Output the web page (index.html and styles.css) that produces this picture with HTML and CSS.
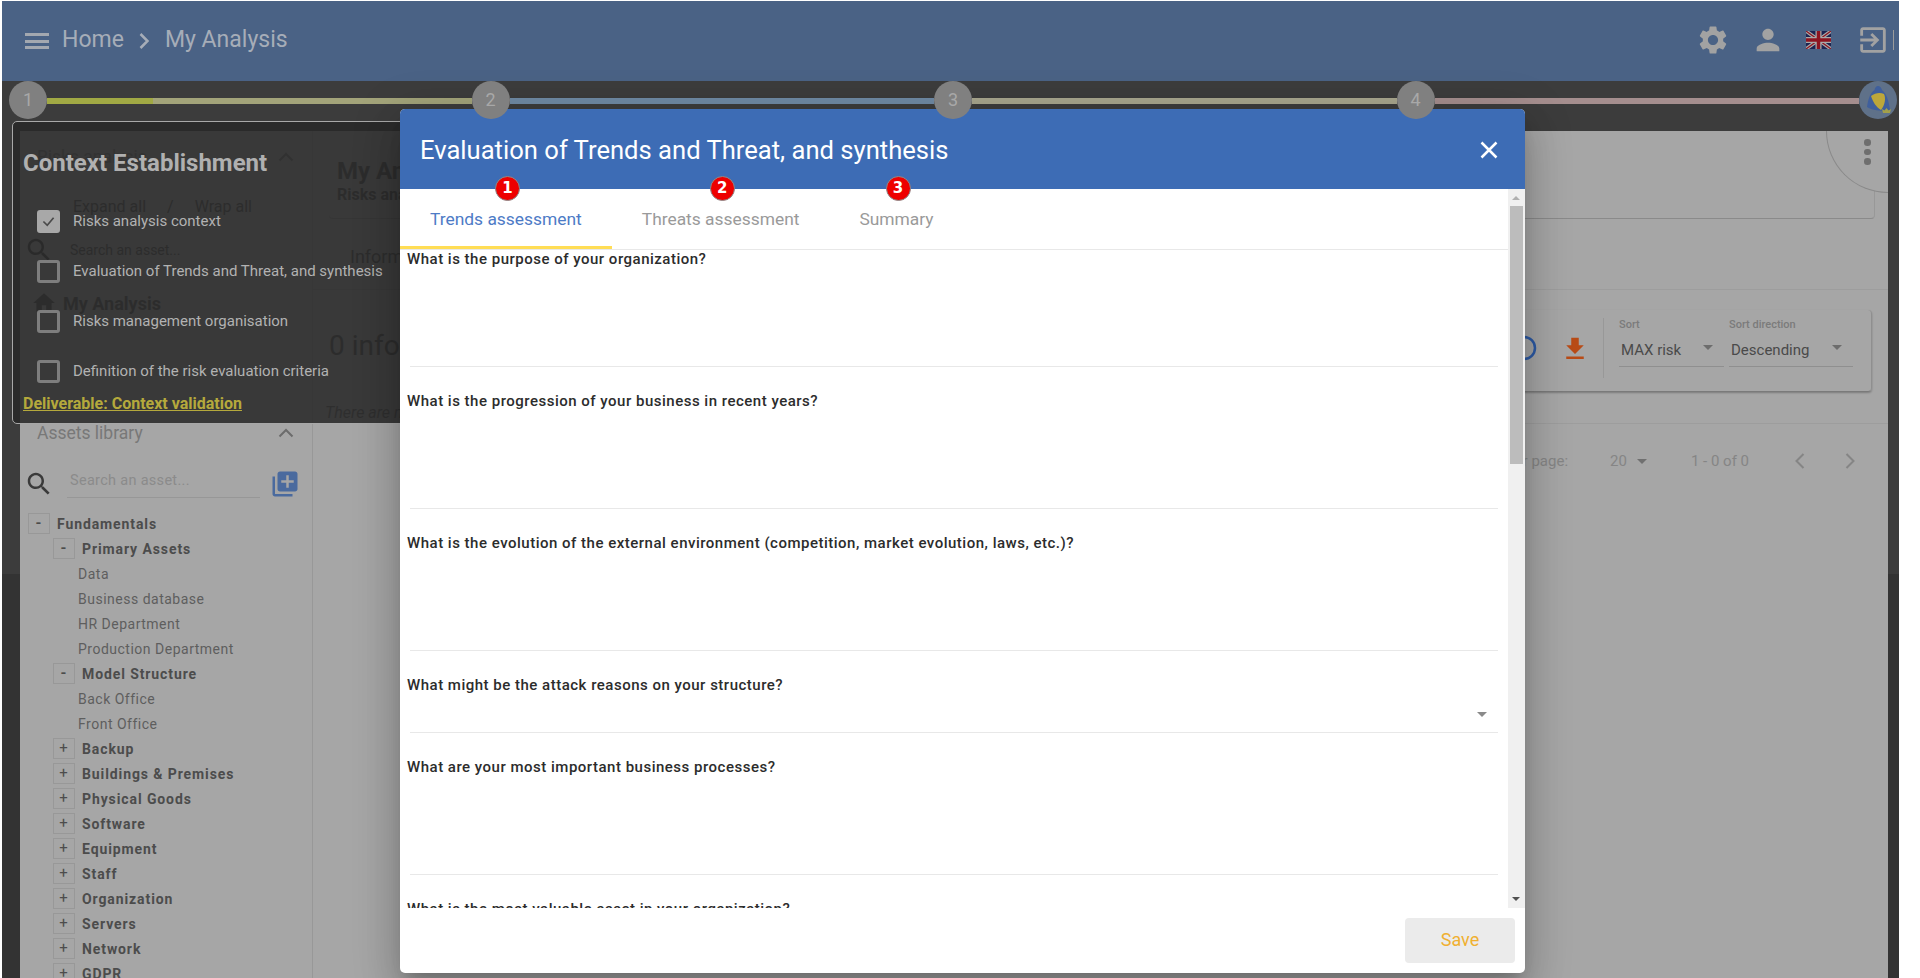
FILE: index.html
```html
<!DOCTYPE html>
<html lang="en">

<head>
  <meta charset="UTF-8" />
  <title>My Analysis</title>
  <link rel="stylesheet" href="styles.css">
</head>

<body>
  <div class="app">
    <header class="topbar">
      <div class="hamburger"><span></span><span></span><span></span></div>
      <span class="crumb">Home</span>
      <svg class="crumb-sep" viewBox="0 0 10 18"><polyline points="1.5,2 8.5,9 1.5,16" /></svg>
      <span class="crumb">My Analysis</span>
      <div class="topbar-icons">
        <svg class="top-icon" viewBox="0 0 24 24"><path d="M19.14 12.94c.04-.3.06-.61.06-.94 0-.32-.02-.64-.07-.94l2.03-1.58c.18-.14.23-.41.12-.61l-1.92-3.32c-.12-.22-.37-.29-.59-.22l-2.39.96c-.5-.38-1.03-.7-1.62-.94l-.36-2.54c-.04-.24-.24-.41-.48-.41h-3.84c-.24 0-.43.17-.47.41l-.36 2.54c-.59.24-1.13.57-1.62.94l-2.39-.96c-.22-.08-.47 0-.59.22L2.74 8.87c-.12.21-.08.47.12.61l2.03 1.58c-.05.3-.09.63-.09.94s.02.64.07.94l-2.03 1.58c-.18.14-.23.41-.12.61l1.92 3.32c.12.22.37.29.59.22l2.39-.96c.5.38 1.03.7 1.62.94l.36 2.54c.05.24.24.41.48.41h3.84c.24 0 .44-.17.47-.41l.36-2.54c.59-.24 1.13-.56 1.62-.94l2.39.96c.22.08.47 0 .59-.22l1.92-3.32c.12-.22.07-.47-.12-.61l-2.01-1.58zM12 15.6c-1.98 0-3.6-1.62-3.6-3.6s1.62-3.6 3.6-3.6 3.6 1.62 3.6 3.6-1.62 3.6-3.6 3.6z" /></svg>
        <svg class="top-icon" viewBox="0 0 24 24"><path d="M12 12c2.21 0 4-1.79 4-4s-1.79-4-4-4-4 1.79-4 4 1.79 4 4 4zm0 2c-2.67 0-8 1.34-8 4v2h16v-2c0-2.66-5.33-4-8-4z" /></svg>
        <svg class="flag" viewBox="0 0 50 36">
          <rect width="50" height="36" fill="#1c2452" />
          <path d="M0 0L50 36M50 0L0 36" stroke="#a9a9a9" stroke-width="7" />
          <path d="M0 0L50 36M50 0L0 36" stroke="#8e1420" stroke-width="2.5" />
          <path d="M25 0V36M0 18H50" stroke="#a9a9a9" stroke-width="12" />
          <path d="M25 0V36M0 18H50" stroke="#8e1420" stroke-width="7" />
        </svg>
        <svg class="top-icon exit" viewBox="0 0 24 24"><path d="M10.09 15.59L11.5 17l5-5-5-5-1.41 1.41L12.67 11H3v2h9.67l-2.58 2.59zM19 3H5c-1.11 0-2 .9-2 2v4h2V5h14v14H5v-4H3v4c0 1.1.89 2 2 2h14c1.1 0 2-.9 2-2V5c0-1.1-.9-2-2-2z" /></svg>
        <span class="top-bar-end"></span>
      </div>
    </header>

    <div class="stepper">
      <div class="step">1</div>
      <div class="step-line line-1"></div>
      <div class="step">2</div>
      <div class="step-line line-2"></div>
      <div class="step">3</div>
      <div class="step-line line-3"></div>
      <div class="step">4</div>
      <div class="step-line line-4"></div>
      <div class="step step-logo">
        <svg viewBox="0 0 38 38">
          <path d="M19 5c-2 0-3 2-3.500 4C11 12 9 19 8 26c4 3 17 5 23 3-1-8-3-16-8-20-.5-2-2-4-4-4z" fill="#3f5f9c" />
          <path d="M12 15c4-3 9-4 13-2 2 4 1 11-3 16-5-3-8-8-10-14z" fill="#bda73a" />
          <path d="M23 28l1 4h7l1-4-2.500 1.500L27.500 27l-2 2.500z" fill="#a3a04a" />
        </svg>
      </div>
    </div>

    <main class="panel">
      <aside class="sidebar">
        <div class="side-head">Risks analysis
          <svg class="side-chevron" viewBox="0 0 16 10"><polyline points="1.500,8.500 8,2 14.500,8.500" /></svg>
        </div>
        <div class="expand-row"><span>Expand all</span><span>/</span><span>Wrap all</span></div>
        <div class="ghost-search">
          <svg class="search-icon" viewBox="0 0 24 24"><path d="M15.500 14h-.79l-.28-.27C15.410 12.590 16 11.110 16 9.500 16 5.910 13.090 3 9.500 3S3 5.910 3 9.500 5.910 16 9.500 16c1.610 0 3.090-.59 4.230-1.570l.27.28v.79l5 4.990L20.490 19l-4.990-5zm-6 0C7.010 14 5 11.990 5 9.500S7.010 5 9.500 5 14 7.010 14 9.500 11.990 14 9.500 14z" /></svg>
          <span>Search an asset...</span>
        </div>
        <div class="home-row">
          <svg viewBox="0 0 24 24"><path d="M10 20v-6h4v6h5v-8h3L12 3 2 12h3v8z" /></svg>
          <span>My Analysis</span>
        </div>

        <div class="side-head assets-head">Assets library
          <svg class="side-chevron" viewBox="0 0 16 10"><polyline points="1.500,8.500 8,2 14.500,8.500" /></svg>
        </div>
        <div class="asset-search">
          <svg class="search-icon" viewBox="0 0 24 24"><path d="M15.500 14h-.79l-.28-.27C15.410 12.590 16 11.110 16 9.500 16 5.910 13.090 3 9.500 3S3 5.910 3 9.500 5.910 16 9.500 16c1.610 0 3.090-.59 4.230-1.570l.27.28v.79l5 4.990L20.490 19l-4.990-5zm-6 0C7.010 14 5 11.990 5 9.500S7.010 5 9.500 5 14 7.010 14 9.500 11.990 14 9.500 14z" /></svg>
          <div class="asset-input">Search an asset...</div>
          <svg class="add-icon" viewBox="0 0 24 24"><path d="M4 6H2v14c0 1.100.9 2 2 2h14v-2H4V6zm16-4H8c-1.100 0-2 .9-2 2v12c0 1.100.9 2 2 2h12c1.100 0 2-.9 2-2V4c0-1.100-.9-2-2-2zm-1 9h-4v4h-2v-4H9V9h4V5h2v4h4v2z" /></svg>
        </div>

        <ul class="tree">
          <li><div class="node"><span class="toggle open">-</span>Fundamentals</div>
            <ul>
              <li><div class="node"><span class="toggle open">-</span>Primary Assets</div>
                <ul>
                  <li class="leaf">Data</li>
                  <li class="leaf">Business database</li>
                  <li class="leaf">HR Department</li>
                  <li class="leaf">Production Department</li>
                </ul>
              </li>
              <li><div class="node"><span class="toggle open">-</span>Model Structure</div>
                <ul>
                  <li class="leaf">Back Office</li>
                  <li class="leaf">Front Office</li>
                </ul>
              </li>
            </ul>
          </li>
          <li><ul>
            <li><div class="node"><span class="toggle">+</span>Backup</div></li>
            <li><div class="node"><span class="toggle">+</span>Buildings &amp; Premises</div></li>
            <li><div class="node"><span class="toggle">+</span>Physical Goods</div></li>
            <li><div class="node"><span class="toggle">+</span>Software</div></li>
            <li><div class="node"><span class="toggle">+</span>Equipment</div></li>
            <li><div class="node"><span class="toggle">+</span>Staff</div></li>
            <li><div class="node"><span class="toggle">+</span>Organization</div></li>
            <li><div class="node"><span class="toggle">+</span>Servers</div></li>
            <li><div class="node"><span class="toggle">+</span>Network</div></li>
            <li><div class="node"><span class="toggle">+</span>GDPR</div></li>
          </ul></li>
        </ul>
      </aside>

      <section class="content">
        <div class="corner-menu"><span></span><span></span><span></span></div>
        <div class="summary-card">
          <h2>My Analysis</h2>
          <p>Risks analysis</p>
        </div>
        <div class="info-tabs"><span>Information risks</span></div>
        <div class="info-row">
          <div class="info-count">0 information risk</div>
          <div class="tool-card">
            <svg class="tool-ring" viewBox="0 0 26 26"><circle cx="13" cy="13" r="11" /></svg>
            <svg class="tool-download" viewBox="0 0 24 24"><path d="M19 9h-4V3H9v6H5l7 7 7-7zM5 18v2h14v-2H5z" /></svg>
            <span class="tool-sep"></span>
            <div class="sort sort-by">
              <label>Sort</label>
              <div class="sort-value">MAX risk<i class="caret"></i></div>
            </div>
            <div class="sort sort-dir">
              <label>Sort direction</label>
              <div class="sort-value">Descending<i class="caret"></i></div>
            </div>
          </div>
        </div>
        <div class="empty-row">There are no risks</div>
        <div class="pager">
          <span class="pager-label">Items per page:</span>
          <span class="pager-size">20<i class="caret"></i></span>
          <span class="pager-range">1 - 0 of 0</span>
          <svg class="pager-arrow" viewBox="0 0 12 18"><polyline points="9.500,2 2.500,9 9.500,16" /></svg>
          <svg class="pager-arrow" viewBox="0 0 12 18"><polyline points="2.500,2 9.500,9 2.500,16" /></svg>
        </div>
      </section>
    </main>
  </div>

  <div class="context-pop">
    <h3>Context Establishment</h3>
    <div class="check-row"><span class="check checked"><svg viewBox="0 0 20 20"><polyline points="4,10 8.500,14.500 16,5.500" /></svg></span>Risks analysis context</div>
    <div class="check-row"><span class="check"></span>Evaluation of Trends and Threat, and synthesis</div>
    <div class="check-row"><span class="check"></span>Risks management organisation</div>
    <div class="check-row"><span class="check"></span>Definition of the risk evaluation criteria</div>
    <a class="deliverable">Deliverable: Context validation</a>
  </div>

  <div class="modal">
    <div class="modal-head">
      <span class="modal-title">Evaluation of Trends and Threat, and synthesis</span>
      <svg class="modal-close" viewBox="0 0 18 18"><path d="M1.500 1.500L16.500 16.500M16.500 1.500L1.500 16.500" /></svg>
    </div>
    <div class="modal-body">
      <div class="modal-main">
        <div class="tabs">
          <div class="tab active">Trends assessment<span class="badge">1</span></div>
          <div class="tab">Threats assessment<span class="badge">2</span></div>
          <div class="tab">Summary<span class="badge">3</span></div>
        </div>
        <div class="questions">
          <div class="question"><label>What is the purpose of your organization?</label></div>
          <div class="question"><label>What is the progression of your business in recent years?</label></div>
          <div class="question"><label>What is the evolution of the external environment (competition, market evolution, laws, etc.)?</label></div>
          <div class="question short"><label>What might be the attack reasons on your structure?</label><i class="caret"></i></div>
          <div class="question"><label>What are your most important business processes?</label></div>
          <div class="question"><label>What is the most valuable asset in your organization?</label></div>
        </div>
      </div>
      <div class="scrollbar">
        <i class="scroll-up"></i>
        <div class="scroll-thumb"></div>
        <i class="scroll-down"></i>
      </div>
    </div>
    <div class="modal-foot">
      <button class="save-btn">Save</button>
    </div>
  </div>
</body>

</html>
```

FILE: styles.css
```css
* {
  margin: 0;
  padding: 0;
  box-sizing: border-box;
}

html,
body {
  height: 100%;
  overflow: hidden;
}

body {
  font-family: 'Roboto', 'Liberation Sans', sans-serif;
  background-color: #fff;
}

.app {
  margin: 1px 21px 0 2px;
  height: 977px;
  overflow: hidden;
  background: linear-gradient(#3c3c3c 573px, #333 573px);
}

/* top bar */
.topbar {
  height: 80px;
  background-color: #4a6285;
  display: flex;
  align-items: center;
  padding-left: 23px;
  color: #a6adb8;
}

.hamburger {
  width: 24px;
  height: 16px;
  display: flex;
  flex-direction: column;
  justify-content: space-between;
  margin-right: 13px;
}

.hamburger span {
  height: 3px;
  background-color: #a3a8b0;
}

.crumb {
  font-size: 23px;
  line-height: 30px;
  margin-top: -2px;
}

.crumb-sep {
  width: 10px;
  height: 18px;
  margin: 0 16px 0 15px;
  fill: none;
  stroke: #a6adb8;
  stroke-width: 2.5;
}

.topbar-icons {
  margin-left: auto;
  display: flex;
  align-items: center;
  padding-right: 5px;
  margin-top: -2px;
}

.top-icon {
  width: 34px;
  height: 34px;
  fill: #a2a2a2;
  margin-right: 21px;
}

.flag {
  width: 25px;
  height: 18px;
  margin-right: 25px;
}

.top-icon.exit {
  margin-right: 3px;
}

.top-bar-end {
  width: 1.500px;
  height: 20px;
  background-color: #9b9b9b;
}

/* steps */
.stepper {
  height: 50px;
  display: flex;
  align-items: flex-start;
  padding: 0 2px 0 7px;
}

.step {
  width: 38px;
  height: 38px;
  border-radius: 50%;
  background-color: #808080;
  color: #a8a8a8;
  font-size: 18px;
  line-height: 38px;
  text-align: center;
  flex: none;
  position: relative;
  z-index: 1;
}

.step-logo {
  background-color: #5f7189;
}

.step-logo svg {
  display: block;
  width: 38px;
  height: 38px;
}

.step-line {
  flex: 1;
  height: 6px;
  margin-top: 17px;
}

.line-1 {
  background: linear-gradient(90deg, #a1a944 25%, #a3a47a 25%);
}

.line-2 {
  background-color: #6f8aa5;
}

.line-3 {
  background-color: #a8a68e;
}

.line-4 {
  background-color: #a58e8e;
}

/* page behind the dialog */
.panel {
  margin: 0 11px 0 18px;
  height: 847px;
  background-color: #a6a6a6;
  display: flex;
  color: #4a4a4a;
}

.sidebar {
  width: 293px;
  flex: none;
  border-right: 1px solid #989898;
  padding: 16px 0 0 8px;
  height: 100%;
}

.side-head {
  position: relative;
  font-size: 17.500px;
  line-height: 20px;
  padding-left: 9px;
  color: #787878;
}

.side-chevron {
  position: absolute;
  left: 250px;
  top: 5px;
  width: 16px;
  height: 10px;
  fill: none;
  stroke: #6c6c6c;
  stroke-width: 2;
}

.expand-row {
  margin-top: 30px;
  padding-left: 45px;
  display: flex;
  gap: 21px;
  font-size: 16px;
  line-height: 20px;
}

.ghost-search {
  margin-top: 23px;
  display: flex;
  align-items: center;
  height: 20px;
  font-size: 14px;
}

.ghost-search span {
  margin-left: 16px;
}

.home-row {
  margin-top: 33px;
  padding-left: 3px;
  height: 20px;
  display: flex;
  align-items: center;
  font-size: 18px;
  font-weight: 700;
}

.home-row svg {
  width: 26px;
  height: 26px;
  fill: #4a4a4a;
  margin-right: 6px;
}

.assets-head {
  margin-top: 110px;
}

.asset-search {
  margin-top: 29px;
  height: 24px;
  display: flex;
  align-items: center;
}

.search-icon {
  width: 30px;
  height: 30px;
  fill: #3a3a3a;
  margin-left: -4px;
  flex: none;
}

.asset-input {
  width: 193px;
  margin: 2px 0 0 13px;
  font-size: 14.500px;
  line-height: 18px;
  letter-spacing: .3px;
  padding: 0 3px 7px;
  color: #8b8b8b;
  border-bottom: 1px solid #979797;
}

.add-icon {
  width: 30px;
  height: 30px;
  fill: #4a6a9e;
  margin-left: 10px;
  flex: none;
}

.tree {
  list-style: none;
  margin-top: 15px;
  font-size: 14px;
  letter-spacing: .5px;
}

.tree ul {
  list-style: none;
  padding-left: 25px;
}

.node {
  height: 25px;
  display: flex;
  align-items: center;
  font-weight: 700;
  letter-spacing: .9px;
  color: #4c4c4c;
}

.toggle {
  width: 22px;
  height: 21px;
  border: 1px solid #989898;
  margin-right: 7px;
  font-size: 15px;
  font-weight: 400;
  line-height: 18px;
  text-align: center;
  flex: none;
}

.toggle.open {
  font-weight: 700;
}

.leaf {
  height: 25px;
  line-height: 26px;
  color: #5e5e5e;
}

.content {
  flex: 1;
  min-width: 0;
  position: relative;
  padding-top: 12px;
}

.corner-menu {
  position: absolute;
  top: 0;
  right: 0;
  width: 62px;
  height: 62px;
  background-color: #a6a6a6;
  border-left: 1px solid #8a8a8a;
  border-bottom: 1px solid #8a8a8a;
  border-bottom-left-radius: 62px;
  display: flex;
  flex-direction: column;
  align-items: center;
  gap: 3px;
  padding: 8px 0 0 20px;
}

.corner-menu span {
  width: 6.500px;
  height: 6.500px;
  border-radius: 50%;
  background-color: #6e6e6e;
}

.summary-card {
  height: 76px;
  margin: 0 13px 0 16px;
  padding: 14px 0 0 8px;
  border-bottom: 1px solid #8a8a8a;
  border-right: 1px solid #989898;
  border-radius: 4px;
}

.summary-card h2 {
  font-size: 24px;
  line-height: 28px;
}

.summary-card p {
  font-size: 16px;
  font-weight: 700;
  line-height: 20px;
}

.info-tabs {
  height: 71px;
  padding: 28px 0 0 37px;
  font-size: 18px;
  line-height: 20px;
  border-bottom: 1px solid #9d9d9d;
}

.info-row {
  display: flex;
  justify-content: space-between;
  margin: 20px 16px 0 16px;
  height: 82px;
}

.info-count {
  font-size: 28px;
  line-height: 32px;
  margin-top: 20px;
}

.tool-card {
  width: 600px;
  display: flex;
  align-items: flex-start;
  justify-content: flex-end;
  padding-right: 18px;
  border-right: 1px solid #8f8f8f;
  border-bottom: 1px solid #7a7a7a;
  border-radius: 4px;
  box-shadow: 0 1px 2px rgba(0, 0, 0, .25);
}

.tool-ring {
  width: 26px;
  height: 26px;
  margin: 25px 23px 0 0;
  fill: none;
  stroke: #2d5aa5;
  stroke-width: 2.500;
}

.tool-download {
  width: 30px;
  height: 30px;
  margin: 24px 13px 0 0;
  fill: #b84b16;
}

.tool-sep {
  width: 1px;
  height: 60px;
  margin: 8px 15px 0 0;
  background-color: #989898;
}

.sort {
  padding-top: 9px;
}

.sort label {
  display: block;
  font-size: 11px;
  line-height: 12px;
  font-weight: 500;
  color: #7b7b7b;
}

.sort-value {
  position: relative;
  height: 27px;
  margin-top: 9px;
  padding-left: 2px;
  font-size: 15px;
  line-height: 20px;
  border-bottom: 1px solid #8f8f8f;
}

.sort-by {
  width: 105px;
  margin-right: 5px;
}

.sort-dir {
  width: 124px;
}

.sort-value .caret {
  position: absolute;
  top: 5px;
  right: 11px;
}

.caret {
  display: inline-block;
  width: 0;
  height: 0;
  border-left: 5px solid transparent;
  border-right: 5px solid transparent;
  border-top: 5px solid #6d6d6d;
}

.empty-row {
  height: 32px;
  padding: 12px 0 0 12px;
  font-size: 16px;
  font-style: italic;
  line-height: 18px;
  color: #5a5a5a;
  border-bottom: 1px solid #9d9d9d;
}

.pager {
  height: 74px;
  display: flex;
  align-items: center;
  justify-content: flex-end;
  padding-right: 32px;
  font-size: 15px;
  color: #858585;
}

.pager-size {
  margin-left: 42px;
  display: flex;
  align-items: center;
  gap: 10px;
}

.pager-size .caret {
  border-top-color: #707070;
}

.pager-range {
  margin: 0 7px 0 44px;
}

.pager-arrow {
  width: 12px;
  height: 18px;
  margin-left: 38px;
  fill: none;
  stroke: #858585;
  stroke-width: 2;
}

/* context popup */
.context-pop {
  position: absolute;
  left: 12px;
  top: 121px;
  width: 420px;
  height: 303px;
  padding: 27px 0 0 10px;
  background-color: rgba(40, 40, 40, .87);
  border: 1px solid #a8a8a8;
  border-radius: 5px;
  color: #b2b2b2;
}

.context-pop h3 {
  font-size: 24px;
  line-height: 28px;
  font-weight: 700;
  color: #b0b0b0;
}

.check-row {
  display: flex;
  align-items: center;
  height: 50px;
  font-size: 15px;
  padding-left: 14px;
}

.context-pop h3 + .check-row {
  margin-top: 19px;
}

.check {
  width: 23px;
  height: 23px;
  border: 3px solid #7e7e7e;
  border-radius: 3px;
  margin-right: 13px;
  flex: none;
}

.check.checked {
  background-color: #a8a8a8;
  border-color: #a8a8a8;
}

.check svg {
  display: block;
  width: 17px;
  height: 17px;
  fill: none;
  stroke: #4a4a4a;
  stroke-width: 2;
}

.deliverable {
  display: block;
  margin-top: -1px;
  font-size: 16px;
  font-weight: 700;
  line-height: 18px;
  color: #b5a93c;
  text-decoration: underline;
}

/* dialog */
.modal {
  position: absolute;
  left: 400px;
  top: 109px;
  width: 1125px;
  height: 864px;
  background-color: #fff;
  border-radius: 5px;
  display: flex;
  flex-direction: column;
  box-shadow: 0 11px 15px -7px rgba(0, 0, 0, .2), 0 24px 38px 3px rgba(0, 0, 0, .14), 0 9px 46px 8px rgba(0, 0, 0, .12);
}

.modal-head {
  height: 80px;
  flex: none;
  background-color: #3d6cb5;
  border-radius: 5px 5px 0 0;
  display: flex;
  align-items: center;
  justify-content: space-between;
  padding: 2px 27px 0 20px;
  color: #fff;
}

.modal-title {
  font-size: 25.600px;
  line-height: 30px;
}

.modal-close {
  width: 18px;
  height: 18px;
  fill: none;
  stroke: #fff;
  stroke-width: 2.500;
}

.modal-body {
  height: 719px;
  flex: none;
  display: flex;
}

.modal-main {
  flex: 1;
  min-width: 0;
  display: flex;
  flex-direction: column;
}

.tabs {
  height: 61px;
  flex: none;
  display: flex;
  border-bottom: 1px solid #e8e8e8;
}

.tab {
  position: relative;
  padding: 0 30px;
  height: 60px;
  line-height: 60px;
  font-size: 17.400px;
  color: #9a9a9a;
}

.tab.active {
  color: #4d7bc6;
  border-bottom: 3px solid #ffdd55;
}

.badge {
  position: absolute;
  left: 50%;
  top: -13px;
  width: 25px;
  height: 25px;
  margin-left: -11px;
  border-radius: 50%;
  background-color: #ee0000;
  border: 1px solid #8c8c8c;
  color: #fff;
  font-family: 'DejaVu Sans', sans-serif;
  font-size: 15px;
  font-weight: 700;
  line-height: 22px;
  text-align: center;
}

.questions {
  flex: 1;
  min-height: 0;
  overflow: hidden;
  padding-left: 7px;
}

.question {
  position: relative;
  height: 117px;
  margin-bottom: 25px;
}

.question.short {
  height: 57px;
}

.question label {
  display: block;
  font-size: 15px;
  font-weight: 500;
  line-height: 18px;
  letter-spacing: .5px;
  color: #2c2c2c;
}

.question::after {
  content: '';
  position: absolute;
  left: 3px;
  right: 10px;
  bottom: 0;
  height: 1px;
  background-color: #e8e8e8;
}

.question .caret {
  position: absolute;
  right: 21px;
  top: 36px;
  border-top-color: #8a8a8a;
}

.scrollbar {
  width: 17px;
  flex: none;
  background-color: #f0f0f0;
  position: relative;
}

.scroll-thumb {
  position: absolute;
  left: 2px;
  top: 17px;
  width: 13px;
  height: 258px;
  background-color: #bcbcbc;
}

.scroll-up,
.scroll-down {
  position: absolute;
  left: 4px;
  width: 0;
  height: 0;
  border-left: 4px solid transparent;
  border-right: 4px solid transparent;
}

.scroll-up {
  top: 7px;
  border-bottom: 4px solid #b0b0b0;
}

.scroll-down {
  bottom: 7px;
  border-top: 4px solid #505050;
}

.modal-foot {
  flex: 1;
  display: flex;
  justify-content: flex-end;
  padding: 10px 10px 0 0;
}

.save-btn {
  width: 110px;
  height: 45px;
  border: none;
  border-radius: 4px;
  background-color: #ebebeb;
  color: #f0b030;
  font-family: inherit;
  font-size: 18px;
  padding-bottom: 2px;
}
```
